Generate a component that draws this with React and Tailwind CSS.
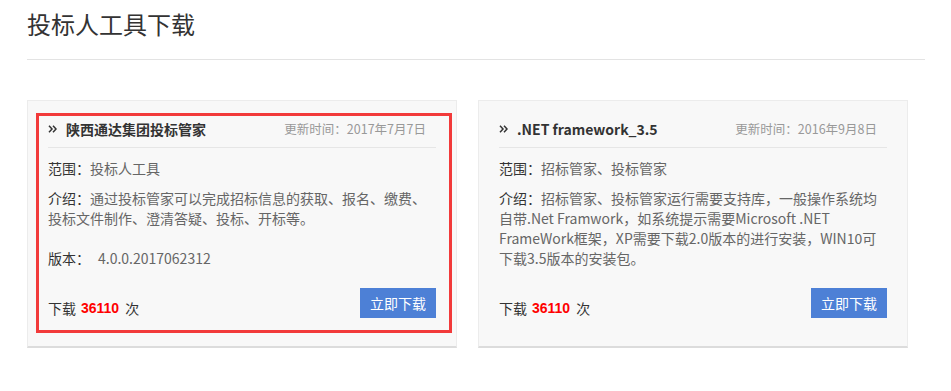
import React from "react";

const FONT = { fontFamily: '"Microsoft YaHei", "Noto Sans CJK SC", sans-serif' };

function Chevrons() {
  return (
    <svg width="9" height="8" viewBox="0 0 9 8" className="shrink-0">
      <path d="M1 0.8 L4 4 L1 7.2" fill="none" stroke="#333" strokeWidth="1.5" />
      <path d="M5 0.8 L8 4 L5 7.2" fill="none" stroke="#333" strokeWidth="1.5" />
    </svg>
  );
}

function Card({ title, date, scope, desc, version, highlight }) {
  return (
    <div className="relative w-[430px] h-[248px] bg-[#f8f8f8] border border-[#ececec] border-b-2 border-b-[#dcdcdc] px-[20px] pt-[19px]">
      {highlight && (
        <div className="absolute left-[8px] top-[12px] w-[416px] h-[220px] border-[3px] border-[#f23a3a] pointer-events-none" />
      )}
      <div className="flex items-center justify-between h-[18px]">
        <div className="flex items-center">
          <Chevrons />
          <span className="ml-[9px] text-[14px] font-bold text-[#333] leading-[18px]">{title}</span>
        </div>
        <span className="text-[12.5px] text-[#999] leading-[18px] mr-[10px]">{date}</span>
      </div>
      <div className="mt-[9px] border-b border-[#e6e6e6]" />
      <div className="mt-[10px] text-[14px] leading-[20px] text-[#666]">
        <span className="text-[#333]">范围：</span>
        {scope}
      </div>
      <div className="mt-[10px] h-[80px] text-[14px] leading-[20px] text-[#666]">
        <div>
          <span className="text-[#333]">介绍：</span>
          {desc}
        </div>
        {version && (
          <div className="mt-[20px]">
            <span className="text-[#333]">版本：</span>
            <span className="ml-[8px]">{version}</span>
          </div>
        )}
      </div>
      <div className="mt-[20px] flex items-end justify-between">
        <div className="flex items-end text-[14px] leading-[20px] text-[#333]">
          <span>下载</span>
          <span
            className="ml-[5px] font-bold text-[#ff0000]"
            style={{ fontFamily: '"Liberation Sans", Arial, sans-serif' }}
          >
            36110
          </span>
          <span className="ml-[6px]">次</span>
        </div>
        <button className="w-[76px] h-[30px] bg-[#4d80d6] text-white text-[14px] leading-[30px] text-center">
          立即下载
        </button>
      </div>
    </div>
  );
}

export default function App() {
  return (
    <div className="w-[951px] h-[391px] bg-white" style={FONT}>
      <div className="ml-[27px] w-[898px]">
        <div className="pt-[8px] pb-[19px] border-b border-[#e3e3e3] text-[24px] leading-[32px] text-[#333]">
          投标人工具下载
        </div>
        <div className="mt-[40px] flex gap-[21px]">
          <Card
            highlight
            title="陕西通达集团投标管家"
            date="更新时间：2017年7月7日"
            scope="投标人工具"
            desc="通过投标管家可以完成招标信息的获取、报名、缴费、投标文件制作、澄清答疑、投标、开标等。"
            version="4.0.0.2017062312"
          />
          <Card
            title=".NET framework_3.5"
            date="更新时间：2016年9月8日"
            scope="招标管家、投标管家"
            desc={
              <>
                招标管家、投标管家运行需要支持库，一般操作系统均
                <br />
                自带.Net Framwork，如系统提示需要Microsoft .NET
                <br />
                FrameWork框架，XP需要下载2.0版本的进行安装，WIN10可
                <br />
                下载3.5版本的安装包。
              </>
            }
          />
        </div>
      </div>
    </div>
  );
}
